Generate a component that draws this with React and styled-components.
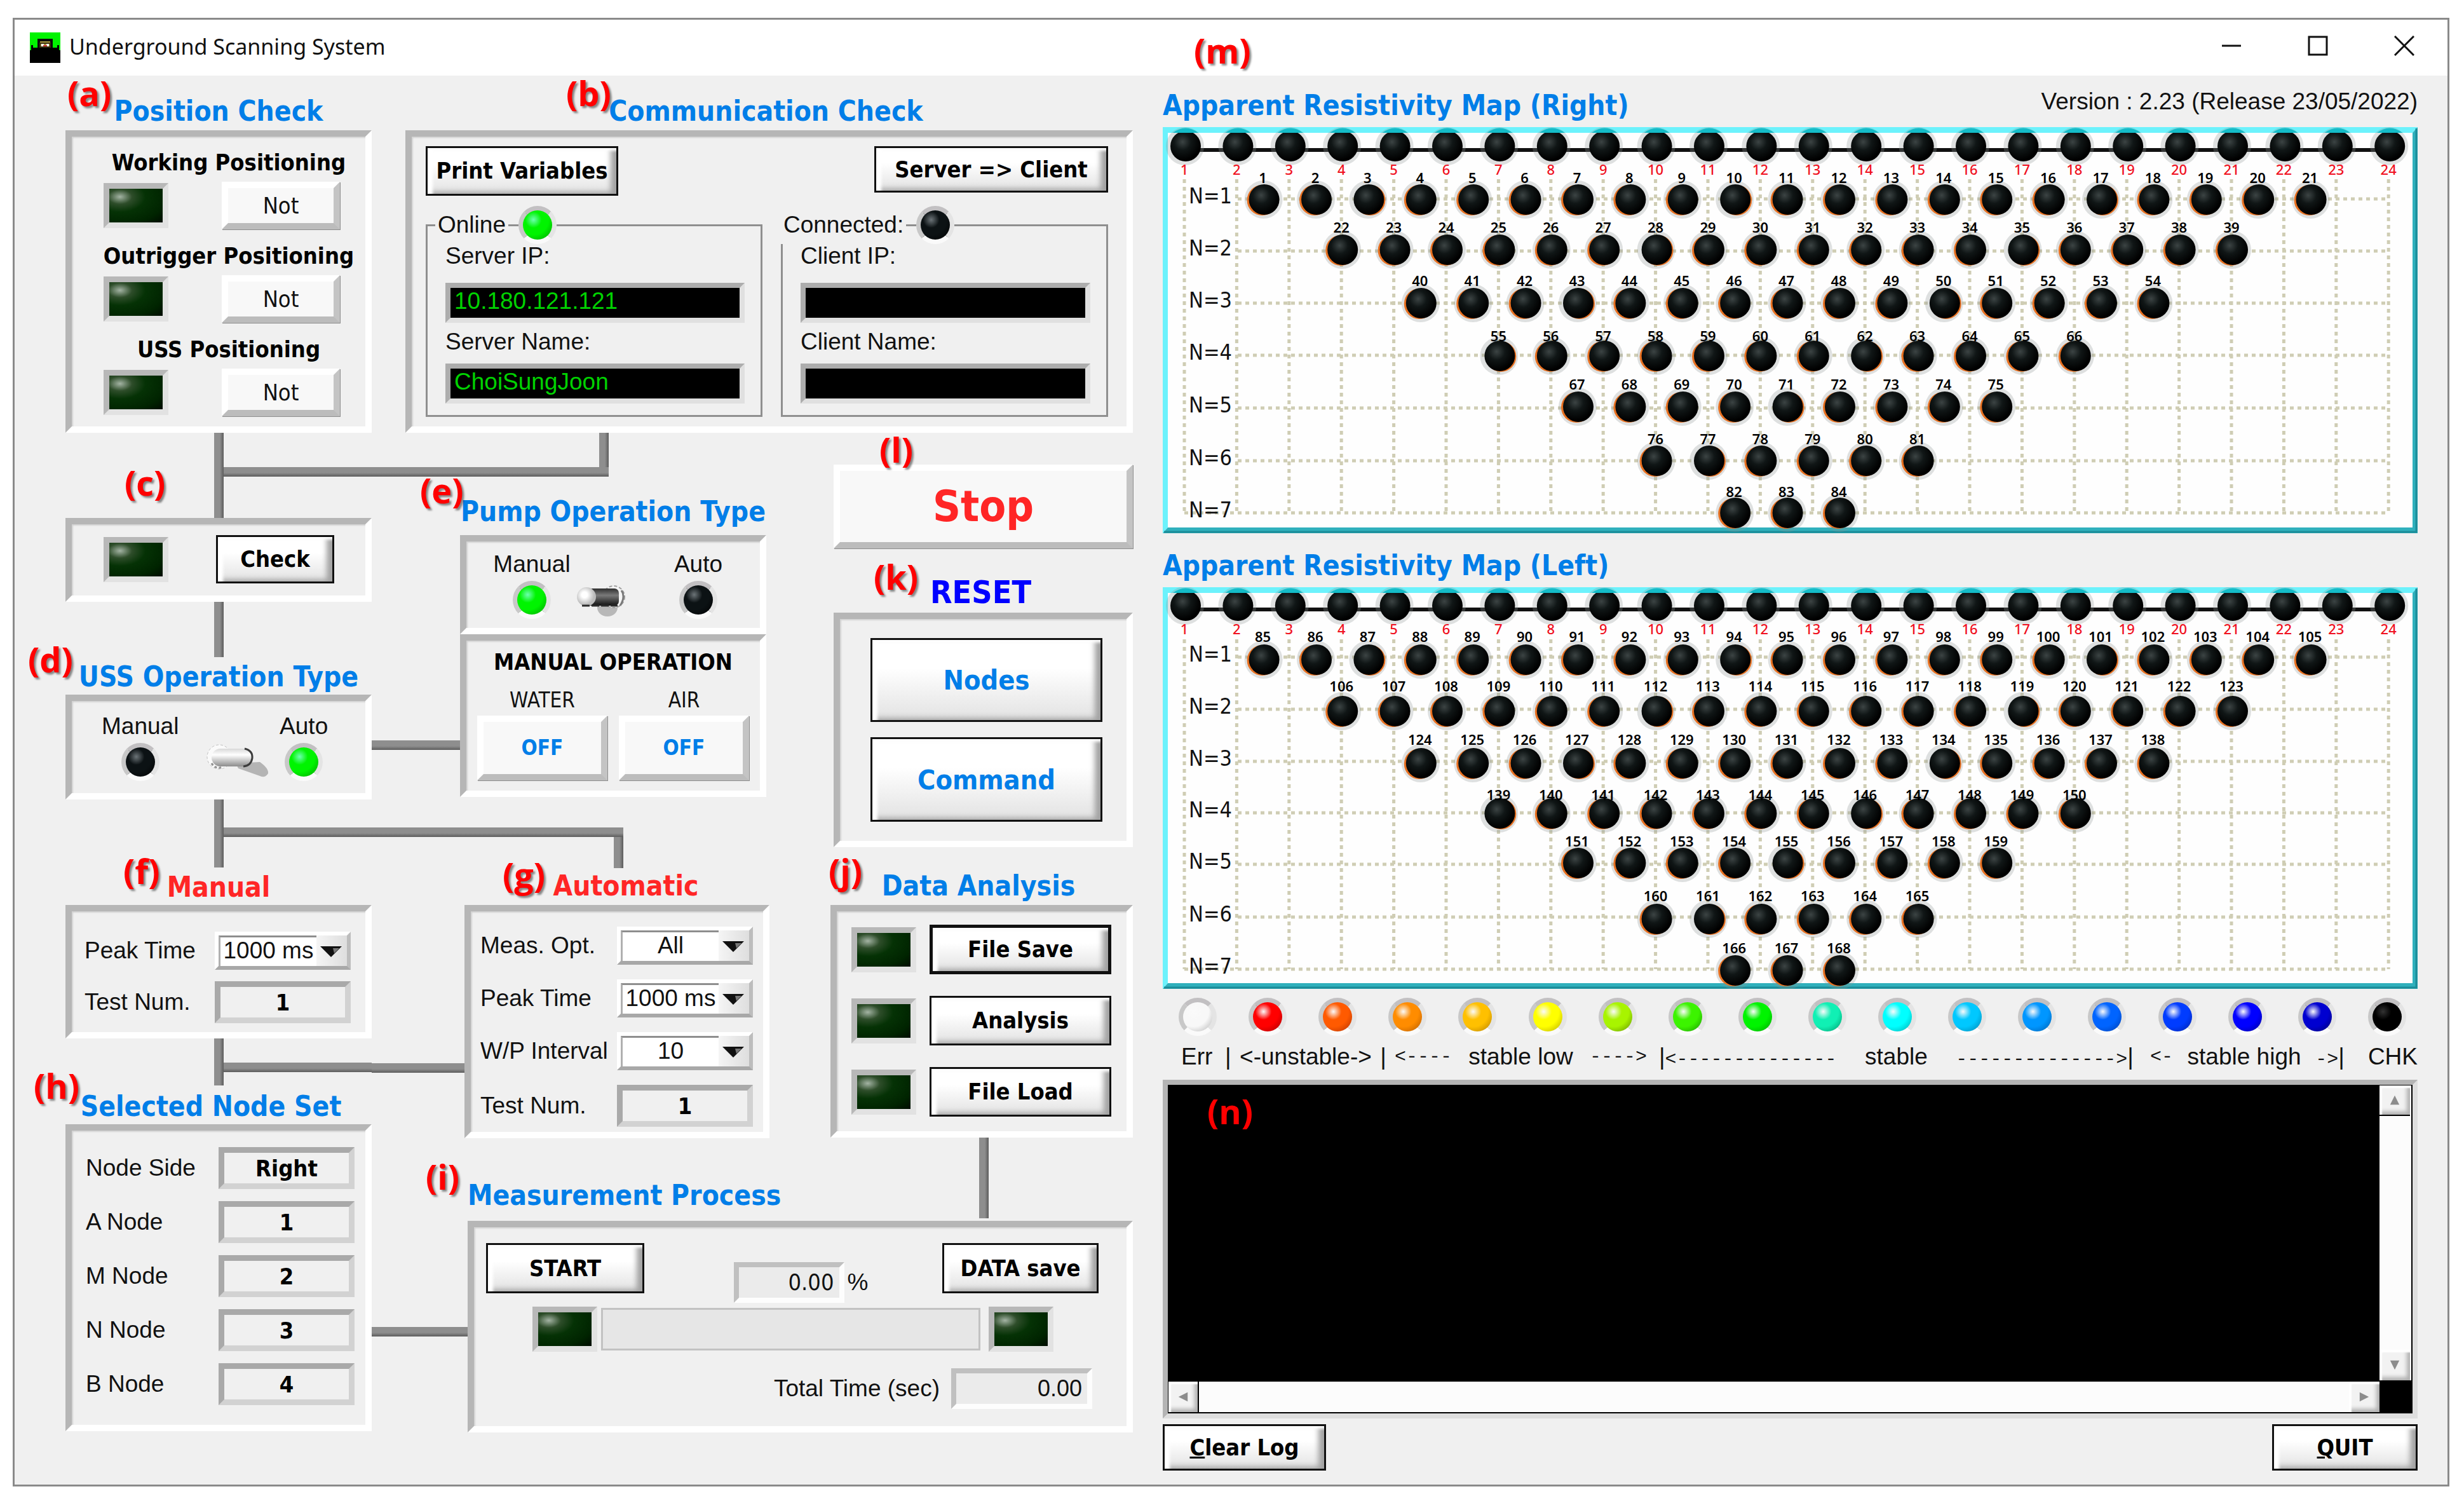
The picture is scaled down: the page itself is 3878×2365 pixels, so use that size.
import React, { useState } from 'react';
import styled, { createGlobalStyle, css } from 'styled-components';

const fontUi = '"DejaVu Sans Condensed", "DejaVu Sans", Tahoma, sans-serif';
const fontPlain = '"Liberation Sans", Arial, sans-serif';
const fontCaption = '"Noto Sans", "Open Sans", sans-serif';

const blue = '#007ee8';
const red = '#ff2626';

const GlobalStyle = createGlobalStyle`
  * {
    box-sizing: border-box;
  }

  body {
    margin: 0;
    background: #ffffff;
    color: #111111;
    font-family: ${fontPlain};
    font-size: 37px;
    line-height: 44px;
  }

  button, input, select, textarea, output {
    font: inherit;
    color: inherit;
  }
`;

/* ---------- window ---------- */

const Window = styled.div`
  margin: 28px 23px 28px 20px;
  border: 3px solid #8a8a8a;
  background: #f0f0f0;
`;

const TitleBar = styled.header`
  display: flex;
  align-items: center;
  height: 88px;
  padding-left: 24px;
  background: #ffffff;
`;

const AppName = styled.h1`
  flex: 1;
  margin: 0 0 4px 14px;
  font-family: ${fontCaption};
  font-weight: 400;
  font-size: 34px;
  line-height: 48px;
`;

const CaptionButton = styled.button`
  display: flex;
  align-items: center;
  justify-content: center;
  width: 136px;
  height: 88px;
  padding: 0 0 6px;
  border: 0;
  background: transparent;
`;

const Body = styled.main`
  display: grid;
  grid-template-columns: minmax(0, 1680fr) minmax(0, 1975fr);
  column-gap: 47px;
  padding: 19px 47px 22px 80px;
`;

/* ---------- shared parts ---------- */

const Section = styled.section`
  position: relative;
  margin-left: ${(props) => props.$inset || 0}px;
  margin-right: ${(props) => -(props.$bleed || 0)}px;
`;

const Spacer = styled.div`
  height: ${(props) => props.$h}px;
`;

const Title = styled.h2`
  margin: 0 0 ${(props) => props.$gap || 0}px;
  padding: 0 ${(props) => props.$pull || 0}px 0 ${(props) => props.$indent || 0}px;
  font-family: ${fontUi};
  font-weight: 700;
  font-size: ${(props) => (props.$large ? 50 : 44)}px;
  line-height: 56px;
  text-align: ${(props) => props.$align || 'center'};
  white-space: nowrap;
  color: ${(props) => props.$color || blue};
`;

const Marker = styled.span`
  position: absolute;
  z-index: 2;
  left: ${(props) => props.$x}px;
  top: ${(props) => props.$y}px;
  font-family: "Open Sans", "Noto Sans", sans-serif;
  font-weight: 700;
  font-size: 54px;
  line-height: 60px;
  color: #ff0000;
  text-shadow: 3px 3px 3px rgba(0, 0, 0, 0.45);
`;

const Panel = styled.div`
  border: 10px solid;
  border-color: #b6b6b6 #ffffff #ffffff #b6b6b6;
  box-shadow: inset 2px 2px 2px #d2d2d2;
  padding: ${(props) => props.$pad || '0'};
`;

const PushButton = styled.button`
  flex: none;
  width: ${(props) => (props.$w ? `${props.$w}px` : '100%')};
  height: ${(props) => props.$h || 76}px;
  padding: 0;
  border: ${(props) => (props.$focus ? 5 : 3)}px solid #111111;
  background: linear-gradient(#ffffff 35%, #e2e2e2);
  box-shadow: inset 8px 4px 4px #ffffff, inset -9px -3px 8px #a2a2a2;
  font-family: ${fontUi};
  font-weight: 700;
  font-size: ${(props) => (props.$big ? 43 : 36)}px;
  line-height: 48px;
  white-space: nowrap;
  color: ${(props) => (props.$big ? blue : '#000000')};
`;

const FlatButton = styled.button`
  flex: none;
  width: ${(props) => (props.$w ? `${props.$w}px` : '100%')};
  height: ${(props) => props.$h || 75}px;
  padding: 0;
  border: 10px solid;
  border-color: #ffffff #c4c4c4 #bcbcbc #ffffff;
  background: #f8f8f8;
  box-shadow: 1px 1px 0 #8e8e8e;
  font-family: ${fontUi};
  font-size: 36px;
  line-height: 48px;
  color: #111111;

  ${(props) =>
    props.$tone === 'off' &&
    css`
      font-weight: 700;
      font-size: 33px;
      color: ${blue};
    `}

  ${(props) =>
    props.$tone === 'stop' &&
    css`
      font-weight: 700;
      font-size: 68px;
      line-height: 80px;
      color: ${red};
    `}
`;

const Led = styled.span`
  flex: none;
  display: block;
  width: 102px;
  height: 71px;
  border: 9px solid;
  border-color: #b8b8b8 #e2e2e2 #e2e2e2 #b8b8b8;
  background: radial-gradient(
    ellipse at 20% 24%,
    #a4b4a4 0,
    #2e4d2a 20%,
    #053205 42%,
    #002400 75%,
    #000c00 100%
  );
`;

const Lamp = styled.span`
  flex: none;
  display: block;
  width: 60px;
  height: 60px;
  border-radius: 50%;
  border: 7px solid;
  border-color: #c2c0c2 #e4e4e4 #fafafa #c8c8c8;
  background: radial-gradient(
    circle at 36% 32%,
    ${(props) => props.$shine || '#ffffff'} 0,
    ${(props) => props.$color} 30%,
    ${(props) => props.$color} 55%,
    ${(props) => props.$edge || '#000000'} 100%
  );
`;

const BoldCaption = styled.p`
  margin: 0;
  font-family: ${fontUi};
  font-weight: 700;
  font-size: 36px;
  line-height: 48px;
  text-align: center;
  white-space: nowrap;
  color: #000000;
`;

const Indicator = styled.output`
  display: block;
  width: 214px;
  height: 66px;
  border: 9px solid;
  border-color: #a9a9a9 #d2d2d2 #d2d2d2 #a9a9a9;
  font-family: ${fontUi};
  font-weight: 700;
  font-size: 36px;
  line-height: 50px;
  text-align: center;
  color: #000000;
`;

const ReadOut = styled.output`
  display: block;
  width: ${(props) => props.$w}px;
  height: 64px;
  padding-right: 8px;
  border: 8px solid;
  border-color: #c0c0c0 #fdfdfd #fdfdfd #c0c0c0;
  background: #ebebeb;
  font-family: ${(props) => (props.$ui ? fontUi : fontPlain)};
  font-size: 36px;
  line-height: 48px;
  text-align: right;
`;

const SelectBox = styled.div`
  display: flex;
  align-items: center;
  width: 214px;
  height: 60px;
  border: 6px solid;
  border-color: #ffffff #bdbdbd #a8a8a8 #ffffff;
  background: linear-gradient(90deg, #f6f6f6 75%, #dedede);
`;

const SelectInput = styled.select`
  appearance: none;
  flex: 1;
  min-width: 0;
  height: 48px;
  padding: 0 0 4px;
  border: 0;
  border-top: 3px solid #8e8e8e;
  border-left: 3px solid #b0b0b0;
  border-radius: 0;
  background: #ffffff;
  line-height: 40px;
  text-align-last: center;
`;

/* ---------- connectors of the flow ---------- */

const wire = 'linear-gradient(#8e8e8e 60%, #5c5c5c)';

const Trunk = styled.div`
  display: flex;
  height: ${(props) => props.$h}px;
  margin-bottom: ${(props) => props.$gap || 0}px;
  padding-left: 234px;
`;

const Stem = styled.span`
  width: 15px;
  background: linear-gradient(90deg, #8e8e8e 60%, #5c5c5c);
`;

const Branch = styled.span`
  flex: 1;
  height: 15px;
  margin-top: ${(props) => props.$top}px;
  background: ${wire};
`;

const Gutter = styled.div`
  display: flex;
  flex-direction: column;
`;

const Link = styled.span`
  height: 15px;
  margin: ${(props) => props.$top}px ${(props) => -(props.$over || 0)}px 0 0;
  background: ${wire};
`;

const Elbow = styled.div`
  width: ${(props) => props.$w}px;
  height: ${(props) => props.$h}px;
  padding-right: 15px;
  background:
    ${wire} 0 ${(props) => (props.$down ? '0' : '100%')} / 100% 15px no-repeat,
    linear-gradient(90deg, #8e8e8e 60%, #5c5c5c) 100% 0 / 15px 100% no-repeat;
`;

/* ---------- left board ---------- */

const TopRow = styled.div`
  display: grid;
  grid-template-columns: minmax(0, 482fr) minmax(0, 1145fr);
  column-gap: 53px;
  padding-top: 9px;
`;

const Flow = styled.div`
  display: grid;
  grid-template-columns: minmax(0, 482fr) minmax(0, 139fr) minmax(0, 1059fr);
`;

const Columns = styled.div`
  display: grid;
  grid-template-columns: minmax(0, 482fr) minmax(0, 476fr);
  column-gap: 101px;
  margin-bottom: 4px;
`;

const PositionItem = styled.div`
  & + & {
    margin-top: 18px;
  }

  ${BoldCaption} {
    padding-left: 32px;
    margin-bottom: 6px;
  }
`;

const LedRow = styled.div`
  display: flex;
  align-items: center;
  justify-content: space-between;
  padding: ${(props) => props.$pad || '0 40px 0 50px'};
`;

const ButtonRow = styled.div`
  display: flex;
  justify-content: space-between;
  align-items: flex-start;
`;

const Peers = styled.div`
  display: grid;
  grid-template-columns: minmax(0, 531fr) minmax(0, 516fr);
  column-gap: 29px;
  margin-top: 16px;
`;

const Peer = styled.fieldset`
  min-width: 0;
  margin: 0;
  padding: 0 25px 18px 28px;
  border: 3px solid #8f8f8f;
`;

const PeerLegend = styled.legend`
  display: flex;
  align-items: center;
  margin-left: ${(props) => props.$left}px;
  padding: 0 0 0 4px;

  &::before {
    content: '';
    order: 1;
    width: 16px;
    height: 3px;
    margin-left: 4px;
    background: #8f8f8f;
  }

  ${Lamp} {
    order: 2;
  }
`;

const PeerLabel = styled.label`
  display: block;
  margin: ${(props) => (props.$first ? '-3px 0 20px' : '8px 0 12px')};
`;

const PeerField = styled.input`
  display: block;
  width: 100%;
  height: 63px;
  padding: 0 0 6px 6px;
  border: 8px solid;
  border-color: #adadad #e0e0e0 #e0e0e0 #adadad;
  border-radius: 0;
  background: #000000;
  color: #00d200;
`;

const ModeRow = styled.div`
  display: flex;
  justify-content: space-between;
  align-items: flex-end;
`;

const Mode = styled.div`
  display: flex;
  flex-direction: column;
  align-items: center;
  gap: 4px;
  width: 124px;
`;

const ToggleButton = styled.button`
  display: block;
  padding: 0;
  border: 0;
  background: transparent;
  margin: 0 ${(props) => (props.$on ? 0 : 44)}px 0 ${(props) => (props.$on ? 44 : 0)}px;

  svg {
    display: block;
  }
`;

const Valves = styled.div`
  display: grid;
  grid-template-columns: 1fr 1fr;
  column-gap: 18px;
  margin-top: 16px;
`;

const Valve = styled.div`
  text-align: center;
  font-family: ${fontUi};
  font-size: 33px;
  line-height: 40px;

  span {
    display: block;
    margin-bottom: 4px;
  }
`;

const Rows = styled.div`
  display: flex;
  flex-direction: column;
  gap: ${(props) => props.$gap}px;
`;

const FormRow = styled.div`
  display: flex;
  align-items: center;
  justify-content: space-between;
  white-space: nowrap;
`;

const Percent = styled.div`
  display: flex;
  align-items: center;
  gap: 5px;
  padding-top: 30px;
  margin-left: 24px;
`;

const ProgressRow = styled.div`
  display: flex;
  align-items: center;
  margin: 6px 0 26px;
  padding: 0 71px 0 73px;
`;

const Progress = styled.div`
  flex: 1;
  height: 67px;
  margin: 0 13px 0 6px;
  border: 3px solid #c2c2c2;
  background: #e6e6e6;
`;

const TotalRow = styled.div`
  display: flex;
  justify-content: flex-end;
  align-items: center;
  gap: 18px;
  padding-right: 10px;
`;

/* ---------- right side ---------- */

const MapHead = styled.div`
  display: flex;
  justify-content: space-between;
  margin-bottom: 6px;
`;

const Version = styled.p`
  margin: 0;
`;

const MapSvg = styled.svg`
  display: block;
  width: 100%;
  height: auto;
  margin-bottom: ${(props) => props.$gap}px;
  font-family: ${fontCaption};
`;

const LampScale = styled.div`
  display: flex;
  justify-content: space-between;
  padding: 0 18px 0 25px;
`;

const ScaleText = styled.div`
  display: grid;
  grid-template-columns: 69fr 267fr 416fr 773fr 343fr 78fr;
  margin: 11px 0 10px;
  padding-left: 29px;
  white-space: pre;
`;

const ScalePart = styled.span`
  display: flex;
  justify-content: space-between;
  padding-right: ${(props) => props.$right || 0}px;
`;

const Dash = styled.span`
  font-family: "Liberation Mono", monospace;
  font-size: 30px;
`;

const LogBox = styled.div`
  position: relative;
  display: grid;
  grid-template-columns: minmax(0, 1fr) 50px;
  grid-template-rows: 466px 50px;
  padding: 1px 2px 0 1px;
  border: 8px solid;
  border-color: #b4b4b4 #dedede #dedede #b4b4b4;
  background: #000000;
`;

const LogText = styled.textarea`
  display: block;
  width: 100%;
  height: 100%;
  padding: 8px;
  border: 0;
  resize: none;
  background: #000000;
  color: #00d200;
`;

const ScrollTrack = styled.div`
  display: flex;
  flex-direction: ${(props) => (props.$vertical ? 'column' : 'row')};
  justify-content: space-between;
  border-bottom: 2px solid #000000;
  background: #fcfcfc;
`;

const ScrollButton = styled.button`
  display: flex;
  align-items: center;
  justify-content: center;
  width: 48px;
  height: 48px;
  padding: 0;
  border: 0 solid #000000;
  border-right-width: ${(props) => (props.$edge === 'right' ? 2 : 0)}px;
  border-bottom-width: ${(props) => (props.$edge === 'bottom' ? 2 : 0)}px;
  background: #f2f2f2;
  box-shadow: inset 4px 4px 2px #ffffff, inset -5px -5px 6px #b0b0b0;
`;

const Footer = styled.div`
  display: flex;
  justify-content: space-between;
  margin-top: 9px;
`;

/* ---------- small components ---------- */

const GreenLamp = () => <Lamp $color="#00f400" $shine="#6cffb0" $edge="#009a00" />;
const BlackLamp = () => <Lamp $color="#0c1214" $shine="#6c7478" />;

const AppIcon = () => (
  <svg width="48" height="48" viewBox="0 0 48 48" aria-hidden="true">
    <rect width="48" height="48" fill="#00f400" />
    <rect y="28" width="48" height="20" fill="#000" />
    <path d="M12 10h24v16H12z" fill="#0a0a0a" />
    <path d="M16 14h16v8H16z" fill="#a8983c" />
    <path d="M18 18h4v5h-4zM26 18h4v5h-4z" fill="#fff" />
    <path d="M21 20h6v3h-6z" fill="#d03c3c" />
    <path d="M2 20h3v4h38v-4h3v10H2z" fill="#000" />
    <path d="M16 17h16v6H16z" fill="none" stroke="#3a3010" strokeWidth="2" />
  </svg>
);

const Toggle = ({ on, label, onClick }) => (
  <ToggleButton type="button" role="switch" aria-checked={on} aria-label={label} $on={on} onClick={onClick}>
    {on ? (
      <svg width="100" height="60" viewBox="0 0 100 60">
        <defs>
          <linearGradient id="pillOn" x1="0" y1="0" x2="0" y2="1">
            <stop offset="0" stopColor="#d8d8d8" />
            <stop offset="0.35" stopColor="#ffffff" />
            <stop offset="1" stopColor="#8c8c8c" />
          </linearGradient>
        </defs>
        <path d="M46 32L84 30Q98 40 97 48Q92 56 84 52L50 40z" fill="#b4b4b4" />
        <circle cx="20" cy="22" r="19" fill="#fafafa" stroke="#c0c0c0" strokeDasharray="4 3" />
        <rect x="8" y="9" width="64" height="28" rx="14" fill="url(#pillOn)" />
        <path d="M60 9Q73 12 72 24Q70 36 58 37" fill="none" stroke="#3c3c3c" strokeWidth="3" />
        <path d="M8 32Q14 42 26 38" fill="none" stroke="#909090" strokeWidth="3" strokeDasharray="4 3" />
      </svg>
    ) : (
      <svg width="80" height="60" viewBox="0 0 80 60">
        <defs>
          <linearGradient id="pillOff" x1="0" y1="0" x2="0" y2="1">
            <stop offset="0" stopColor="#2e2e2e" />
            <stop offset="0.4" stopColor="#7a7a7a" />
            <stop offset="1" stopColor="#101010" />
          </linearGradient>
          <radialGradient id="knobOff" cx="0.4" cy="0.4">
            <stop offset="0.3" stopColor="#ffffff" />
            <stop offset="1" stopColor="#bcbcbc" />
          </radialGradient>
        </defs>
        <ellipse cx="50" cy="42" rx="16" ry="14" fill="#b8b8b8" />
        <circle cx="60" cy="25" r="17" fill="#f4f4f4" stroke="#a0a0a0" strokeWidth="2" strokeDasharray="5 3" />
        <rect x="14" y="12" width="54" height="27" rx="7" fill="url(#pillOff)" />
        <path d="M72 15Q79 25 70 39" fill="none" stroke="#7a7a7a" strokeWidth="3" />
        <circle cx="17" cy="25" r="15" fill="url(#knobOff)" />
        <path d="M10 39H66" stroke="#2a2a2a" strokeWidth="3" strokeDasharray="12 3" />
      </svg>
    )}
  </ToggleButton>
);

const ModeSwitch = ({ on, label, onClick }) => (
  <ModeRow>
    <Mode>
      <span>Manual</span>
      {on ? <BlackLamp /> : <GreenLamp />}
    </Mode>
    <Toggle on={on} label={label} onClick={onClick} />
    <Mode>
      <span>Auto</span>
      {on ? <GreenLamp /> : <BlackLamp />}
    </Mode>
  </ModeRow>
);

const Choice = ({ id, label, options }) => (
  <FormRow>
    <label htmlFor={id}>{label}</label>
    <SelectBox>
      <SelectInput id={id} defaultValue={options[0]}>
        {options.map((option) => (
          <option key={option}>{option}</option>
        ))}
      </SelectInput>
      <svg width="48" height="48" viewBox="0 0 48 48" aria-hidden="true">
        <path d="M6 17H40L23 34z" fill="#111" />
        <path d="M26 20H36L28 28z" fill="#777" />
      </svg>
    </SelectBox>
  </FormRow>
);

const Value = ({ id, label, children }) => (
  <FormRow>
    <label htmlFor={id}>{label}</label>
    <Indicator id={id}>{children}</Indicator>
  </FormRow>
);

const arrows = {
  up: 'M10 2L18 18H2z',
  down: 'M2 2H18L10 18z',
  left: 'M2 10L18 2V18z',
  right: 'M2 2L18 10L2 18z',
};

const Scroll = ({ dir, edge }) => (
  <ScrollButton type="button" aria-label={`Scroll ${dir}`} $edge={edge}>
    <svg width="18" height="18" viewBox="0 0 20 20">
      <path d={arrows[dir]} fill="#8c8c8c" />
    </svg>
  </ScrollButton>
);

/* ---------- resistivity map ---------- */

const PITCH = 82.4;
const FIRST = 36;
const LEVELS = [1, 2, 3, 4, 5, 6, 7];

const Ball = ({ id, x, y, tint }) => (
  <g>
    <circle cx={x - 1} cy={y} r="30" fill="#8c9494" fillOpacity="0.28" />
    {tint !== undefined && <circle cx={x + tint} cy={y + 1} r="24" fill="#e87020" />}
    <circle cx={x} cy={y} r="24" fill={`url(#${id})`} />
  </g>
);

const ResistivityMap = ({ id, height, start, lines, rows, labels, lift, gap }) => {
  const electrodes = Array.from({ length: 24 }, (_, i) => FIRST + i * PITCH);
  const bottom = lines[6];
  let number = start;

  return (
    <MapSvg viewBox={`0 0 1975 ${height}`} role="img" aria-label={`Map ${id}`} $gap={gap}>
      <defs>
        <radialGradient id={id} cx="0.4" cy="0.36" r="0.6">
          <stop offset="0" stopColor="#3c4444" />
          <stop offset="0.45" stopColor="#101616" />
          <stop offset="1" stopColor="#000000" />
        </radialGradient>
      </defs>
      <rect width="1975" height={height} fill="#fefefe" />
      <path d={`M0 0H1975L1967 9H8V${height - 9}L0 ${height}z`} fill="#6cf2fc" />
      <path d={`M1975 0V${height}H0L8 ${height - 9}H1967V9z`} fill="#2fb0bc" />
      <path d={`M1973 2V${height - 2}H2`} fill="none" stroke="#1c8c98" strokeWidth="3" />
      <g stroke="#cfcdb4" strokeWidth="5" strokeDasharray="6 6">
        {electrodes.map((x) => (
          <path key={x} d={`M${x - 2} 82V${bottom}`} />
        ))}
        {lines.map((y, i) => (
          <path key={y} d={`M${i === 6 ? 34 : 118} ${y}H1929`} />
        ))}
      </g>
      <path d={`M36 ${lift + 6}H1930`} stroke="#111" strokeWidth="6" />
      {electrodes.map((x, i) => (
        <g key={x}>
          <Ball id={id} x={x} y={lift} />
          {/* the halo darkens the frame behind the electrodes */}
          <path d={`M${x - 20} 9Q${x} -6 ${x + 20} 9z`} fill="#14bcc8" />
          <text x={x - 2} y={lift + 45} fontSize="22" fontWeight="500" textAnchor="middle" fill="#f01020">
            {i + 1}
          </text>
        </g>
      ))}
      {LEVELS.map((level, row) => (
        <g key={level}>
          <text x="41" y={lines[row] + 7} fontFamily={fontUi} fontSize="34" fill="#111">
            N={level}
          </text>
          {Array.from({ length: 24 - 3 * level }, (_, i) => {
            const x = FIRST + (1.5 * level + i) * PITCH;
            const tint = (i * 5 + row) % 7 === 3 ? 2 : -3;
            return (
              <g key={i}>
                <Ball id={id} x={x} y={rows[row]} tint={tint} />
                <text x={x - 2} y={labels[row]} fontSize="22" fontWeight="600" textAnchor="middle" fill="#000">
                  {number++}
                </text>
              </g>
            );
          })}
        </g>
      ))}
    </MapSvg>
  );
};

const scaleLamps = [
  ['#f8f8f8', '#b0b0b0'],
  ['#ff0000', '#a00000'],
  ['#ff5a00', '#b03000'],
  ['#ff8c00', '#b05800'],
  ['#ffc000', '#b07c00'],
  ['#ffff00', '#b4a800'],
  ['#a8f400', '#608c00'],
  ['#3cf400', '#189000'],
  ['#00f400', '#009c00'],
  ['#10f0b4', '#009468'],
  ['#00ffff', '#00a4a8'],
  ['#00c8ff', '#0080a8'],
  ['#0096ff', '#005ca8'],
  ['#0064ff', '#003ca8'],
  ['#003cff', '#0020a0'],
  ['#0000ff', '#000090'],
  ['#0000d0', '#000068'],
  ['#000000', '#000000'],
];

const positions = ['Working Positioning', 'Outrigger Positioning', 'USS Positioning'];

const nodeSet = [
  ['Node Side', 'Right'],
  ['A Node', '1'],
  ['M Node', '2'],
  ['N Node', '3'],
  ['B Node', '4'],
];

const times = ['1000 ms', '500 ms', '250 ms'];

const App = () => {
  const [ussAuto, setUssAuto] = useState(true);
  const [pumpAuto, setPumpAuto] = useState(false);

  return (
    <>
      <GlobalStyle />
      <Window>
        <TitleBar>
          <AppIcon />
          <AppName>Underground Scanning System</AppName>
          <CaptionButton type="button" aria-label="Minimize">
            <svg width="32" height="32" viewBox="0 0 32 32">
              <path d="M1 16H31" stroke="#111" strokeWidth="3" />
            </svg>
          </CaptionButton>
          <CaptionButton type="button" aria-label="Maximize">
            <svg width="32" height="32" viewBox="0 0 32 32">
              <rect x="2" y="2" width="28" height="28" fill="none" stroke="#111" strokeWidth="3" />
            </svg>
          </CaptionButton>
          <CaptionButton type="button" aria-label="Close">
            <svg width="32" height="32" viewBox="0 0 32 32">
              <path d="M1 1L31 31M31 1L1 31" stroke="#111" strokeWidth="3" />
            </svg>
          </CaptionButton>
        </TitleBar>

        <Body>
          <div>
            <TopRow>
              <Section>
                <Marker $x={3} $y={-31}>(a)</Marker>
                <Title $gap={2}>Position Check</Title>
                <Panel $pad="17px 0 16px">
                  {positions.map((name) => (
                    <PositionItem key={name}>
                      <BoldCaption>{name}</BoldCaption>
                      <LedRow>
                        <Led />
                        <FlatButton type="button" $w={186}>Not</FlatButton>
                      </LedRow>
                    </PositionItem>
                  ))}
                </Panel>
              </Section>

              <Section>
                <Marker $x={253} $y={-31}>(b)</Marker>
                <Title $gap={2} $pull={10}>Communication Check</Title>
                <Panel $pad="15px 29px 15px 22px">
                  <ButtonRow>
                    <PushButton type="button" $w={303} $h={78}>Print Variables</PushButton>
                    <PushButton type="button" $w={368} $h={73}>{'Server => Client'}</PushButton>
                  </ButtonRow>
                  <Peers>
                    <Peer>
                      <PeerLegend $left={-16}>
                        Online
                        <GreenLamp />
                      </PeerLegend>
                      <PeerLabel htmlFor="server-ip" $first>Server IP:</PeerLabel>
                      <PeerField id="server-ip" readOnly value="10.180.121.121" />
                      <PeerLabel htmlFor="server-name">Server Name:</PeerLabel>
                      <PeerField id="server-name" readOnly value="ChoiSungJoon" />
                    </Peer>
                    <Peer>
                      <PeerLegend $left={-31}>
                        Connected:
                        <BlackLamp />
                      </PeerLegend>
                      <PeerLabel htmlFor="client-ip" $first>Client IP:</PeerLabel>
                      <PeerField id="client-ip" readOnly value="" />
                      <PeerLabel htmlFor="client-name">Client Name:</PeerLabel>
                      <PeerField id="client-name" readOnly value="" />
                    </Peer>
                  </Peers>
                </Panel>
              </Section>
            </TopRow>

            <Flow>
              <div>
                <Trunk $h={134}>
                  <Stem />
                  <Branch $top={54} />
                </Trunk>
                <Section>
                  <Marker $x={93} $y={-86}>(c)</Marker>
                  <Panel $pad="17px 0 19px">
                    <LedRow $pad="0 49px 0 50px">
                      <Led />
                      <PushButton type="button" $w={186}>Check</PushButton>
                    </LedRow>
                  </Panel>
                </Section>
                <Trunk $h={87} $gap={3}>
                  <Stem />
                </Trunk>
                <Section>
                  <Marker $x={-59} $y={-30}>(d)</Marker>
                  <Title>USS Operation Type</Title>
                  <Panel $pad="18px 44px 19px 47px">
                    <ModeSwitch on={ussAuto} label="USS operation type" onClick={() => setUssAuto(!ussAuto)} />
                  </Panel>
                </Section>
                <Trunk $h={107} $gap={3}>
                  <Stem />
                  <Branch $top={44} />
                </Trunk>
                <Section>
                  <Marker $x={91} $y={-28}>(f)</Marker>
                  <Title $color={red}>Manual</Title>
                  <Panel $pad="32px 23px 14px 20px">
                    <Rows $gap={18}>
                      <Choice id="manual-peak" label="Peak Time" options={times} />
                      <Value id="manual-test" label="Test Num.">1</Value>
                    </Rows>
                  </Panel>
                </Section>
                <Trunk $h={74} $gap={5}>
                  <Stem />
                  <Branch $top={38} />
                </Trunk>
                <Section>
                  <Marker $x={-50} $y={-35}>(h)</Marker>
                  <Title $pull={24}>Selected Node Set</Title>
                  <Panel $pad="26px 17px 31px 22px">
                    <Rows $gap={19}>
                      {nodeSet.map(([label, value]) => (
                        <Value key={label} id={label.replace(' ', '-')} label={label}>
                          {value}
                        </Value>
                      ))}
                    </Rows>
                  </Panel>
                </Section>
              </div>

              <Gutter>
                <Link $top={54} />
                <Link $top={415} />
                <Link $top={122} />
                <Link $top={356} $over={7} />
                <Link $top={400} $over={12} />
              </Gutter>

              <div>
                <Columns>
                  <div>
                    <Elbow $w={234} $h={69} />
                    <Spacer $h={27} />
                    <Section>
                      <Marker $x={-63} $y={-36}>(e)</Marker>
                      <Title $gap={9}>Pump Operation Type</Title>
                      <Panel $pad="14px 35px 14px 41px">
                        <ModeSwitch on={pumpAuto} label="Pump operation type" onClick={() => setPumpAuto(!pumpAuto)} />
                      </Panel>
                      <Panel $pad="10px 17px 16px">
                        <BoldCaption>MANUAL OPERATION</BoldCaption>
                        <Valves>
                          {['WATER', 'AIR'].map((name) => (
                            <Valve key={name}>
                              <span>{name}</span>
                              <FlatButton type="button" aria-label={`${name} valve`} $h={102} $tone="off">
                                OFF
                              </FlatButton>
                            </Valve>
                          ))}
                        </Valves>
                      </Panel>
                    </Section>
                    <Spacer $h={48} />
                    <Elbow $w={257} $h={64} $down />
                    <Section $inset={7} $bleed={5}>
                      <Marker $x={60} $y={-20}>(g)</Marker>
                      <Title $color={red} $gap={2} $indent={28}>Automatic</Title>
                      <Panel $pad="24px 16px 8px 15px">
                        <Rows $gap={23}>
                          <Choice id="auto-opt" label="Meas. Opt." options={['All', 'Single']} />
                          <Choice id="auto-peak" label="Peak Time" options={times} />
                          <Choice id="auto-interval" label="W/P Interval" options={['10', '20', '30']} />
                          <Value id="auto-test" label="Test Num.">1</Value>
                        </Rows>
                      </Panel>
                    </Section>
                    <Spacer $h={62} />
                    <Section $inset={12}>
                      <Marker $x={-66} $y={-32}>(i)</Marker>
                      <Title $align="left">Measurement Process</Title>
                    </Section>
                  </div>

                  <div>
                    <Spacer $h={50} />
                    <Section $inset={5}>
                      <Marker $x={72} $y={-54}>(l)</Marker>
                      <FlatButton type="button" $h={132} $tone="stop">Stop</FlatButton>
                    </Section>
                    <Spacer $h={41} />
                    <Section $inset={5}>
                      <Marker $x={63} $y={-27}>(k)</Marker>
                      <Title $large $color="#0000ff" $gap={4} $pull={8}>RESET</Title>
                      <Panel $pad="30px 38px 30px 48px">
                        <Rows $gap={24}>
                          <PushButton type="button" $h={132} $big>Nodes</PushButton>
                          <PushButton type="button" $h={133} $big>Command</PushButton>
                        </Rows>
                      </Panel>
                    </Section>
                    <Spacer $h={33} />
                    <Section>
                      <Marker $x={-3} $y={-26}>(j)</Marker>
                      <Title $gap={2} $pull={10}>Data Analysis</Title>
                      <Panel $pad="21px 0 23px">
                        <Rows $gap={34}>
                          {['File Save', 'Analysis', 'File Load'].map((name) => (
                            <LedRow key={name} $pad="0 24px 0 23px">
                              <Led />
                              <PushButton type="button" $w={286} $h={78} $focus={name === 'File Save'}>
                                {name}
                              </PushButton>
                            </LedRow>
                          ))}
                        </Rows>
                      </Panel>
                    </Section>
                    <Trunk $h={127}>
                      <Stem />
                    </Trunk>
                  </div>
                </Columns>

                <Section $inset={12}>
                  <Panel $pad="25px 44px 27px 19px">
                    <ButtonRow>
                      <PushButton type="button" $w={249} $h={79}>START</PushButton>
                      <Percent>
                        <ReadOut aria-label="Progress" $w={174} $ui>0.00</ReadOut>
                        <span>%</span>
                      </Percent>
                      <PushButton type="button" $w={246} $h={79}>DATA save</PushButton>
                    </ButtonRow>
                    <ProgressRow>
                      <Led />
                      <Progress role="progressbar" aria-label="Measurement" aria-valuenow={0} />
                      <Led />
                    </ProgressRow>
                    <TotalRow>
                      <label htmlFor="total-time">Total Time (sec)</label>
                      <ReadOut id="total-time" $w={222}>0.00</ReadOut>
                    </TotalRow>
                  </Panel>
                </Section>
              </div>
            </Flow>
          </div>

          <div>
            <Section>
              <Marker $x={49} $y={-89}>(m)</Marker>
              <MapHead>
                <Title $align="left">Apparent Resistivity Map (Right)</Title>
                <Version>Version : 2.23 (Release 23/05/2022)</Version>
              </MapHead>
              <ResistivityMap
                id="right"
                height={639}
                start={1}
                lift={30}
                lines={[113, 195, 277, 359, 442, 525, 607]}
                rows={[114, 193, 277, 360, 440, 525, 607]}
                labels={[88, 166, 250, 337, 413, 499, 582]}
                gap={23}
              />
            </Section>
            <MapHead>
              <Title $align="left">Apparent Resistivity Map (Left)</Title>
            </MapHead>
            <ResistivityMap
              id="left"
              height={632}
              start={85}
              lift={29}
              lines={[110, 192, 274, 355, 436, 519, 601]}
              rows={[114, 195, 277, 356, 434, 522, 603]}
              labels={[86, 164, 248, 335, 408, 494, 576]}
              gap={14}
            />
            <LampScale>
              {scaleLamps.map(([color, edge]) => (
                <Lamp key={color} $color={color} $edge={edge} $shine={color === '#000000' ? '#333333' : '#ffffffaa'} />
              ))}
            </LampScale>
            <ScaleText>
              <ScalePart>Err</ScalePart>
              <ScalePart $right={13}>
                <span>|</span>
                <span>{'<-unstable->'}</span>
                <span>|</span>
              </ScalePart>
              <ScalePart $right={19}>
                <Dash>{'<----'}</Dash>
                <span>stable low</span>
                <Dash>{'---->'}</Dash>
              </ScalePart>
              <ScalePart $right={26}>
                <span>
                  |<Dash>{'<--------------'}</Dash>
                </span>
                <span>stable</span>
                <span>
                  <Dash>{'-------------->'}</Dash>|
                </span>
              </ScalePart>
              <ScalePart $right={37}>
                <Dash>{'<-'}</Dash>
                <span>stable high</span>
                <span>
                  <Dash>{'->'}</Dash>|
                </span>
              </ScalePart>
              <ScalePart>CHK</ScalePart>
            </ScaleText>
            <LogBox>
              <Marker $x={62} $y={11}>(n)</Marker>
              <LogText readOnly aria-label="Log" />
              <ScrollTrack $vertical>
                <Scroll dir="up" edge="bottom" />
                <Scroll dir="down" />
              </ScrollTrack>
              <ScrollTrack>
                <Scroll dir="left" edge="right" />
                <Scroll dir="right" />
              </ScrollTrack>
            </LogBox>
            <Footer>
              <PushButton type="button" $w={257} $h={73}>
                <u>C</u>lear Log
              </PushButton>
              <PushButton type="button" $w={229} $h={73}>
                <u>Q</u>UIT
              </PushButton>
            </Footer>
          </div>
        </Body>
      </Window>
    </>
  );
};

export default App;
